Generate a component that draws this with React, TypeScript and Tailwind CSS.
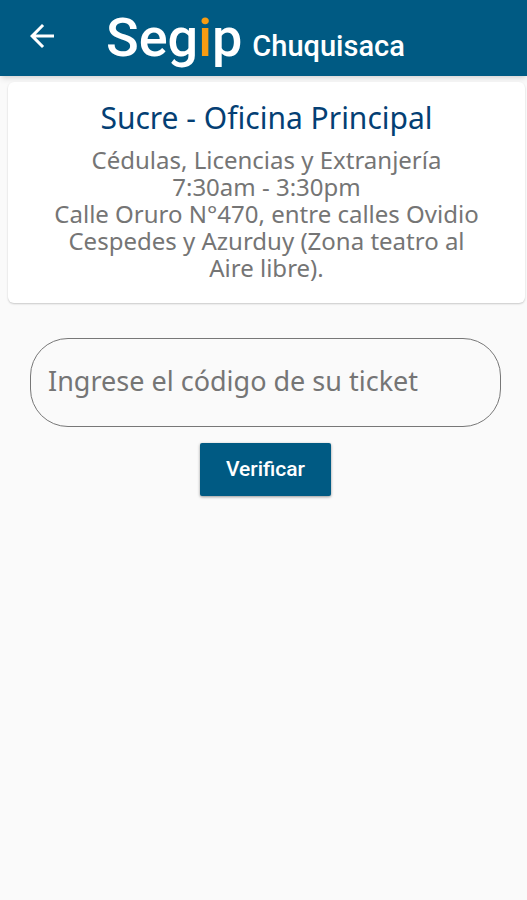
import { useState } from "react"
import type { ReactNode } from "react"

const office = {
  city: "Chuquisaca",
  name: "Sucre - Oficina Principal",
  services: "Cédulas, Licencias y Extranjería",
  hours: "7:30am - 3:30pm",
  address: "Calle Oruro N°470, entre calles Ovidio Cespedes y Azurduy (Zona teatro al Aire libre).",
}

function BackIcon() {
  return (
    <svg className="size-9" viewBox="0 0 24 24" fill="currentColor" aria-hidden="true">
      <path d="M20 11H7.83l5.59-5.59L12 4l-8 8 8 8 1.41-1.41L7.83 13H20v-2z" />
    </svg>
  )
}

function Header({ children }: { children: ReactNode }) {
  return (
    <header className="flex h-19 items-center bg-[#005a83] pl-6 text-white shadow-md">
      <button type="button" aria-label="Volver" className="pb-1">
        <BackIcon />
      </button>
      {children}
    </header>
  )
}

function OfficeCard() {
  return (
    <section className="mt-1.5 mr-0.5 ml-2 rounded-md bg-white px-10 pt-4 pb-[22px] text-center shadow-[0_1px_2px_rgba(0,0,0,0.2)]">
      <h2 className="text-3xl leading-10 text-[#043f74]">{office.name}</h2>
      <div className="mt-2 text-2xl leading-[27px] text-[#757575]">
        <p>{office.services}</p>
        <p>{office.hours}</p>
        <p>{office.address}</p>
      </div>
    </section>
  )
}

function TicketForm() {
  const [code, setCode] = useState("")

  return (
    <form className="flex flex-col items-center pt-[35px] pr-[26px] pl-[30px]" onSubmit={(e) => e.preventDefault()}>
      <input
        type="text"
        aria-label="Código de ticket"
        placeholder="Ingrese el código de su ticket"
        value={code}
        onChange={(e) => setCode(e.target.value)}
        className="h-[89px] w-full rounded-[38px] border border-[#777] bg-transparent px-[17px] pb-1 text-[27px] text-[#333] placeholder:text-[#757575]"
      />
      <button
        type="submit"
        className="mt-4 h-[53px] rounded-xs bg-[#005a83] px-[26px] font-[Roboto,sans-serif] text-[21px] font-medium text-white shadow-[0_1px_3px_rgba(0,0,0,0.4)]"
      >
        Verificar
      </button>
    </form>
  )
}

export default function App() {
  return (
    <div className="min-h-screen bg-[#fafafa] font-['Noto_Sans',sans-serif]">
      <Header>
        <h1 className="ml-[46px] flex items-baseline gap-2.5 pt-1 font-[Roboto,sans-serif]">
          <span className="text-[54px] leading-none font-medium">
            Seg<span className="text-[#f79c12]">i</span>p
          </span>
          <span className="text-[29px] font-medium">{office.city}</span>
        </h1>
      </Header>
      <main>
        <OfficeCard />
        <TicketForm />
      </main>
    </div>
  )
}
